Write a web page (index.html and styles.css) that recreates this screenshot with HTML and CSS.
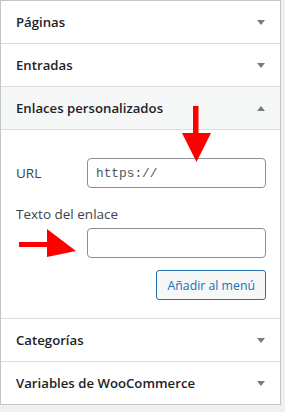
FILE: index.html
```html
<!DOCTYPE html>
<html lang="es">
<head>
    <meta charset="UTF-8">
    <meta name="viewport" content="width=device-width, initial-scale=1.0">
    <title>Elementos del menú</title>
    <link rel="stylesheet" href="styles.css">
</head>
<body>
    <div class="accordion">
        <div class="section">
            <h3 class="section-title">Páginas <span class="toggle"></span></h3>
        </div>
        <div class="section">
            <h3 class="section-title">Entradas <span class="toggle"></span></h3>
        </div>
        <div class="section open">
            <h3 class="section-title">Enlaces personalizados <span class="toggle"></span></h3>
            <div class="section-body">
                <div class="url-row">
                    <label for="custom-url">URL</label>
                    <input type="text" id="custom-url" class="field code" value="https://">
                </div>
                <label for="custom-text" class="field-label">Texto del enlace</label>
                <input type="text" id="custom-text" class="field indent">
                <div class="actions">
                    <button type="button" class="button">Añadir al menú</button>
                </div>
            </div>
        </div>
        <div class="section">
            <h3 class="section-title">Categorías <span class="toggle"></span></h3>
        </div>
        <div class="section">
            <h3 class="section-title">Variables de WooCommerce <span class="toggle"></span></h3>
        </div>

        <!-- flechas de anotación -->
        <svg class="notes" width="281" height="405" viewBox="0 0 281 405">
            <rect x="193" y="106" width="5.5" height="28" fill="#ff0000"/>
            <polygon points="182,133 211,133 196.5,162" fill="#ff0000"/>
            <rect x="19" y="242" width="29" height="5" fill="#ff0000"/>
            <polygon points="47,229 76,251 47,257" fill="#ff0000"/>
        </svg>
    </div>
</body>
</html>
```

FILE: styles.css
```css
body {
    font-family: "Open Sans", Arial, sans-serif;
    background-color: #f0f0f1;
    color: #1d2327;
    margin: 0;
    padding: 0;
}

.accordion {
    position: relative;
    width: 279px;
    background-color: #ffffff;
    border: 1px solid #c3c4c7;
}

.section {
    border-bottom: 1px solid #dcdcde;
}

.section:last-of-type {
    border-bottom: none;
}

.section-title {
    display: flex;
    justify-content: space-between;
    align-items: center;
    height: 42px;
    margin: 0;
    padding: 0 15px 0 15px;
    font-size: 13.2px;
    font-weight: 600;
}

.open .section-title {
    background-color: #f6f7f7;
    border-bottom: 1px solid #dcdcde;
}

.toggle {
    width: 0;
    height: 0;
    border-left: 4px solid transparent;
    border-right: 4px solid transparent;
    border-top: 5px solid #787c82;
}

.open .toggle {
    border-top: none;
    border-bottom: 5px solid #787c82;
}

.section-body {
    padding: 28px 14px 18px 15px;
    font-size: 13.5px;
    color: #3c434a;
}

.url-row {
    display: flex;
    align-items: center;
    margin-bottom: 16px;
}

.url-row label {
    flex-shrink: 0;
    width: 71px;
}

.field-label {
    display: block;
    line-height: 20px;
    margin-bottom: 4px;
}

.field {
    display: block;
    flex: 1;
    width: 100%;
    height: 30px;
    box-sizing: border-box;
    border: 1px solid #8c8f94;
    border-radius: 4px;
    padding: 0 8px;
    font-family: inherit;
    font-size: 14px;
    color: #50575e;
    background-color: #ffffff;
}

.url-row .field {
    width: auto;
    min-width: 0;
}

.indent {
    margin-left: 71px;
    width: calc(100% - 71px);
}

.code {
    font-family: "Liberation Mono", "DejaVu Sans Mono", monospace;
    font-size: 12.8px;
}

.actions {
    display: flex;
    justify-content: flex-end;
    margin-top: 12px;
}

.button {
    height: 30px;
    padding: 0 10px;
    font-family: inherit;
    font-size: 12.3px;
    color: #2271b1;
    background-color: #f6f7f7;
    border: 1px solid #2271b1;
    border-radius: 3px;
    cursor: pointer;
}

.notes {
    position: absolute;
    top: -1px;
    left: -1px;
    pointer-events: none;
}
```
